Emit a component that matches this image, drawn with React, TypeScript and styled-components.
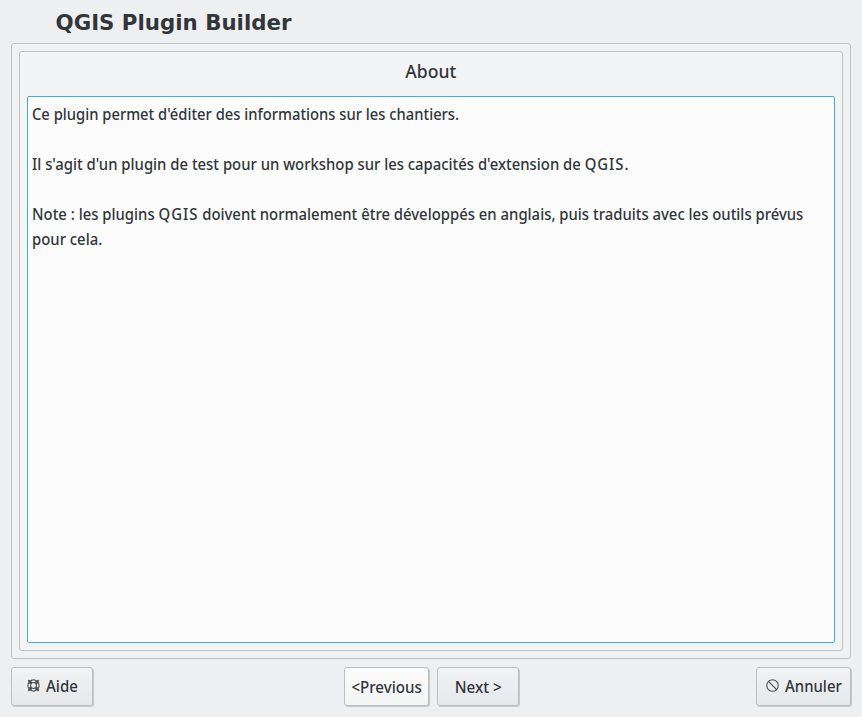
import React from "react";
import styled, { createGlobalStyle } from "styled-components";

const GlobalStyle = createGlobalStyle`
  * { box-sizing: border-box; }
  body { margin: 0; background: #eeeff1; }
`;

const Dialog = styled.main`
  width: 862px;
  height: 717px;
  display: flex;
  flex-direction: column;
  padding: 0 10px 10px 11px;
  background: #eeeff1;
  color: #31363b;
  font: 500 17px/25px "Noto Sans", sans-serif;
`;
const Title = styled.h1`
  margin: 0;
  height: 43px;
  padding: 1px 0 0 44.5px;
  font: bold 21.33px/43px "DejaVu Sans", sans-serif;
`;
const Outer = styled.section`
  height: 616px;
  margin-right: 1px;
  padding: 7px;
  display: flex;
  border: 1px solid #bfc1c3;
  border-radius: 3px;
  background: #f0f1f2;
`;
const Inner = styled.div`
  flex: 1;
  min-width: 0;
  display: flex;
  flex-direction: column;
  padding: 0 7px 7px;
  border: 1px solid #bfc1c3;
  border-radius: 3px;
  background: #f3f4f6;
`;
const Heading = styled.h2`
  margin: 0;
  height: 44px;
  text-align: center;
  font: 500 18.5px/37px "Noto Sans", sans-serif;
`;
const Editor = styled.div`
  flex: 1;
  padding: 4px;
  border: 1px solid #3daee9;
  border-radius: 2px;
  background: #fcfcfc;
`;
const Line = styled.p<{ $scale: number }>`
  margin: 0;
  width: max-content;
  height: 25px;
  white-space: nowrap;
  transform: scaleX(${(p) => p.$scale});
  transform-origin: left;
`;
const Acronym = styled.span`
  letter-spacing: 1.1px;
`;
const Condensed = styled.span<{ $scale: number }>`
  display: inline-block;
  white-space: nowrap;
  transform: scaleX(${(p) => p.$scale});
`;
const Footer = styled.footer`
  display: grid;
  grid-template-columns: 333px 86px 7px 83px 1fr 96px;
  margin-top: 8px;
`;
const Button = styled.button<{ $w: number; $col: number; $active?: boolean }>`
  grid-column: ${(p) => p.$col};
  width: ${(p) => p.$w - 1}px;
  height: 39px;
  padding: 0;
  display: flex;
  align-items: center;
  justify-content: center;
  border: 1px solid #bcbebf;
  border-radius: 3px;
  box-shadow: 1px 1px 0 #c6c7c9;
  background: ${(p) => (p.$active ? "linear-gradient(#fcfcfc, #f3f4f4)" : "linear-gradient(#f1f2f3, #e7e8ea)")};
  color: inherit;
  font: inherit;
`;
const IconButton = styled(Button)<{ $left: number }>`
  justify-content: flex-start;
  padding: 0 0 2px ${(p) => p.$left}px;
  gap: 6px;
  ${Condensed} { transform-origin: left; }
`;
const Icon = styled.svg`
  flex: none;
  width: 13px;
  height: 13px;
  fill: none;
  stroke: #4d5052;
`;

const lines: { text: React.ReactNode; scale: number }[] = [
  { text: "Ce plugin permet d'éditer des informations sur les chantiers.", scale: 0.868 },
  { text: "", scale: 1 },
  { text: <>Il s'agit d'un plugin de test pour un workshop sur les capacités d'extension de <Acronym>QGIS</Acronym>.</>, scale: 0.874 },
  { text: "", scale: 1 },
  { text: <>Note : les plugins <Acronym>QGIS</Acronym> doivent normalement être développés en anglais, puis traduits avec les outils prévus</>, scale: 0.875 },
  { text: "pour cela.", scale: 0.875 },
];

const HelpIcon = () => (
  <Icon viewBox="0 0 12 12">
    <circle cx="6" cy="6" r="5.2" />
    <circle cx="6" cy="6" r="2.7" />
    <path d="M1.2 1.2l2.6 2.6M10.8 1.2L8.2 3.8M1.2 10.8l2.6-2.6M10.8 10.8L8.2 8.2" strokeWidth="1.8" />
    <path d="M4 1v3H1M8 1v3h3M4 11V8H1M8 11V8h3" strokeWidth=".8" />
  </Icon>
);
const CancelIcon = () => (
  <Icon viewBox="0 0 12 12">
    <circle cx="6" cy="6" r="5.3" />
    <path d="M2.2 2.2l7.6 7.6" strokeWidth="1.1" />
  </Icon>
);

export default function App() {
  return (
    <Dialog>
      <GlobalStyle />
      <Title>QGIS Plugin Builder</Title>
      <Outer>
        <Inner>
          <Heading><Condensed $scale={0.95}>About</Condensed></Heading>
          <Editor>
            {lines.map((line, i) => <Line key={i} $scale={line.scale}>{line.text}</Line>)}
          </Editor>
        </Inner>
      </Outer>
      <Footer>
        <IconButton $w={83} $col={1} $left={15}><HelpIcon /><Condensed $scale={0.885}>Aide</Condensed></IconButton>
        <Button $w={86} $col={2} $active><Condensed $scale={0.888}>&lt;Previous</Condensed></Button>
        <Button $w={83} $col={4}><Condensed $scale={0.9}>Next &gt;</Condensed></Button>
        <IconButton $w={96} $col={6} $left={9}><CancelIcon /><Condensed $scale={0.878}>Annuler</Condensed></IconButton>
      </Footer>
    </Dialog>
  );
}
